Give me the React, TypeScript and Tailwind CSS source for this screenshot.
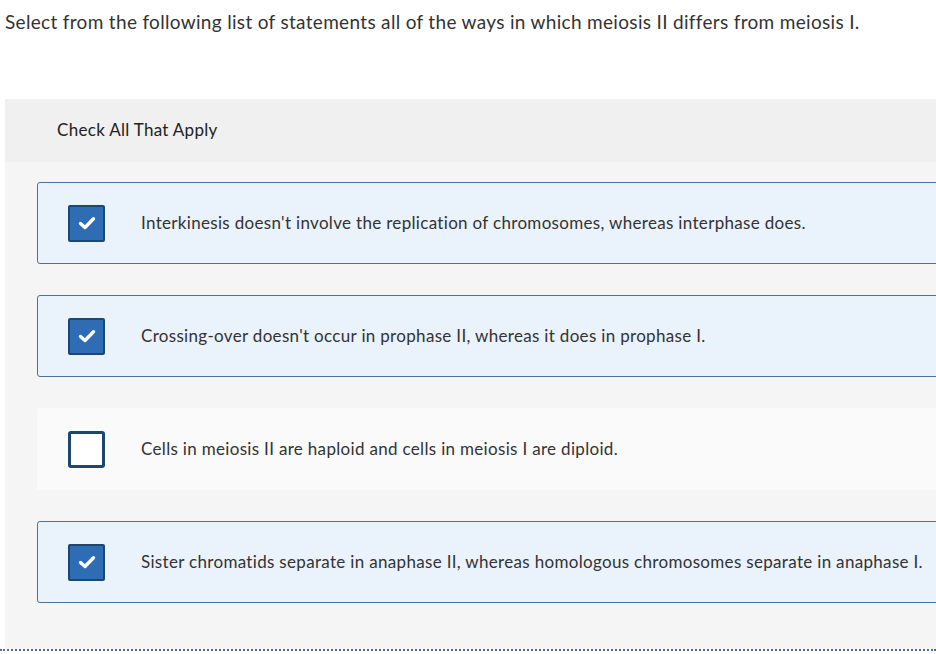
import React from "react";

const options = [
  { text: "Interkinesis doesn't involve the replication of chromosomes, whereas interphase does.", checked: true },
  { text: "Crossing-over doesn't occur in prophase II, whereas it does in prophase I.", checked: true },
  { text: "Cells in meiosis II are haploid and cells in meiosis I are diploid.", checked: false },
  { text: "Sister chromatids separate in anaphase II, whereas homologous chromosomes separate in anaphase I.", checked: true },
];

function Box({ checked }: { checked: boolean }) {
  return checked ? (
    <div className="w-[37px] h-[37px] shrink-0 bg-[#2e6cb3] border-2 border-[#1d4670] rounded-[2px] flex items-center justify-center">
      <svg width="18" height="14" viewBox="0 0 18 14">
        <path d="M2.5 7.5 L7 11.5 L15.5 2.8" fill="none" stroke="#fff" strokeWidth="3.4" strokeLinecap="round" strokeLinejoin="round" />
      </svg>
    </div>
  ) : (
    <div className="w-[37px] h-[37px] shrink-0 bg-white border-[3px] border-[#1d4670] rounded-[3px]" />
  );
}

export default function App() {
  return (
    <div className="w-[936px] h-[654px] overflow-hidden bg-white text-[#333]" style={{ fontFamily: "Lato, 'Open Sans', sans-serif" }}>
      <div className="pl-[5px] pt-[9px] text-[19px] leading-[26px] text-[#333] tracking-[0.32px]">
        Select from the following list of statements all of the ways in which meiosis II differs from meiosis I.
      </div>
      <div className="ml-[5px] mt-[64px] bg-[#f5f5f5] h-[550px]">
        <div className="h-[63px] bg-[#f0f0f0] pl-[52px] pt-[19px] text-[17px] leading-[24px] text-[#222] tracking-[0.3px]">
          Check All That Apply
        </div>
        <div className="pl-[32px] pt-[20px] flex flex-col gap-[31px]">
          {options.map((o, i) => (
            <div
              key={i}
              className={
                o.checked
                  ? "h-[82px] w-[920px] bg-[#eaf2fb] border border-[#4a72a0] rounded-[3px] flex items-center pl-[30px]"
                  : "h-[82px] w-[920px] bg-[#fafafa] rounded-[3px] flex items-center pl-[31px]"
              }
            >
              <Box checked={o.checked} />
              <div className="ml-[36px] text-[17px] leading-[24px] text-[#333] tracking-[0.32px] whitespace-nowrap">{o.text}</div>
            </div>
          ))}
        </div>
      </div>
      <div className="border-t-2 border-dotted border-[#4e6f8f] w-full" />
    </div>
  );
}
